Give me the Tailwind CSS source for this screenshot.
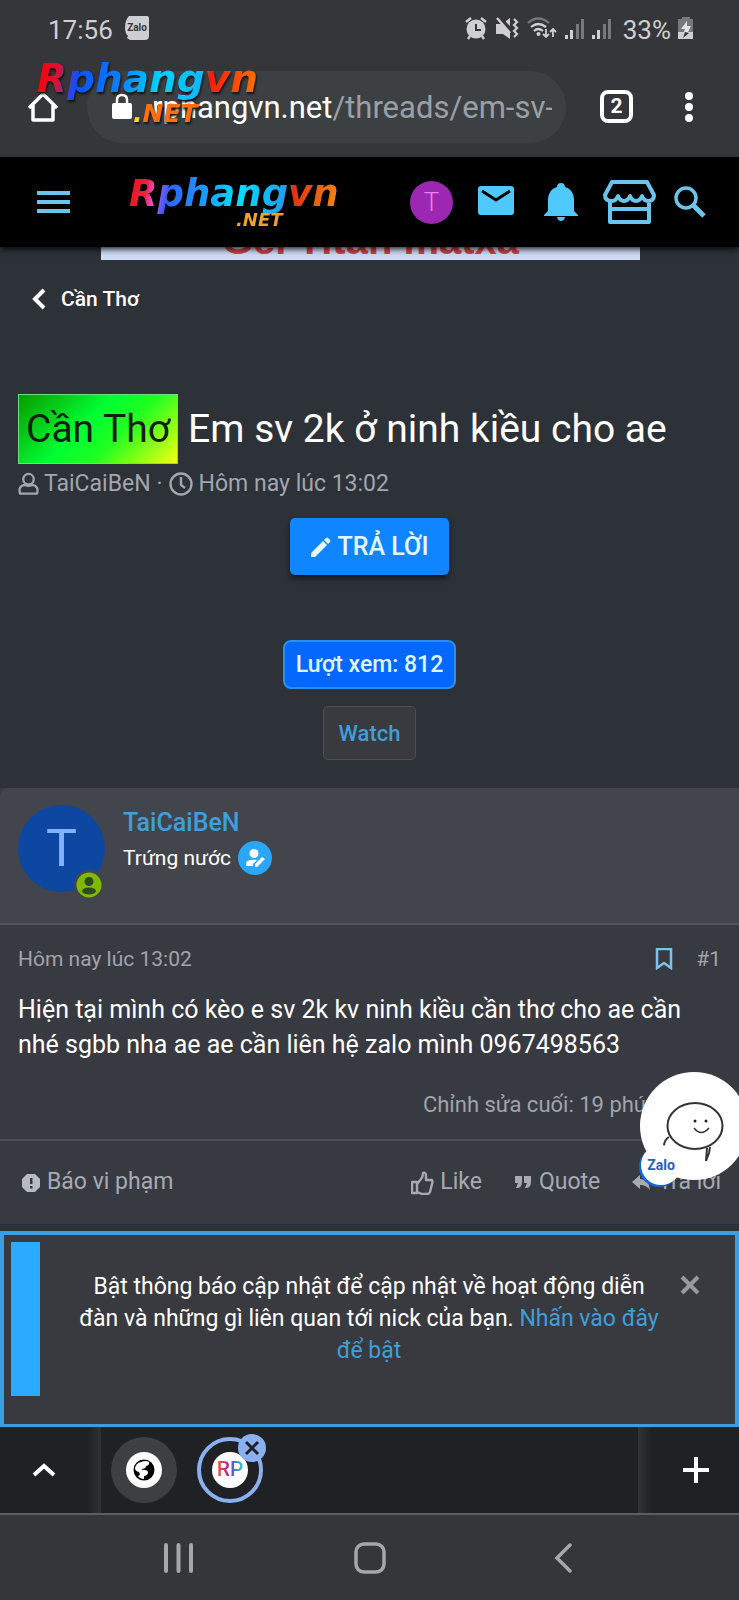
<!DOCTYPE html>
<html lang="vi">
<head>
<meta charset="utf-8">
<meta name="viewport" content="width=device-width, initial-scale=1">
<title>Cần Thơ</title>
<script src="https://cdn.jsdelivr.net/npm/@tailwindcss/browser@4"></script>
</head>
<body class="relative flex min-h-screen flex-col overflow-x-hidden bg-[#2d3138] font-[Roboto,'Noto_Sans',sans-serif] text-white">

<!-- Phone status bar -->
<div class="flex h-14 items-center bg-[#35363a] pr-[45px] pl-12 text-[26px] text-[#cfcfd1]">
  <span class="pt-1">17:56</span>
  <svg class="ml-3 h-6 w-6" viewBox="0 0 24 24" role="img" aria-label="Zalo"><path fill="#cfcfd1" d="M4 0h18q2 0 2 2v18q0 4-4 4H5l-3-2 1-2Q0 17 0 12 0 4 4 0z"/><text x="12" y="15" text-anchor="middle" font-family="Roboto,sans-serif" font-weight="700" font-size="10" fill="#35363a">Zalo</text></svg>
  <div class="ml-auto flex items-center gap-[7px]">
    <svg class="h-6 w-6" viewBox="0 0 24 24" fill="none" stroke="#cfcfd1"><circle cx="12" cy="13" r="9.500" fill="#cfcfd1" stroke="none"/><path d="M2 6l5-4M22 6l-5-4M6 20l-2 3M18 20l2 3" stroke-width="2.400"/><path d="M12 8v6h5" stroke="#35363a" stroke-width="2"/></svg>
    <svg class="h-6 w-6" viewBox="0 0 24 24"><path fill="#cfcfd1" d="M1 8h5l9 9v6l-7-5H1zM11 5l4-3v8l-4-4z"/><path d="M2 2l13 15" fill="none" stroke="#cfcfd1" stroke-width="2.400"/><path d="M18 3l3 3-3 3 3 3-3 3 3 3-3 3" transform="translate(1 0)" fill="none" stroke="#cfcfd1" stroke-width="2.200"/></svg>
    <svg class="h-6 w-8" viewBox="0 0 32 24" fill="none" stroke="#cfcfd1" stroke-width="2.200"><path d="M2 7q10-9 21 0" stroke="#77787b"/><path d="M5 11q7-6 15 0M8 15q4-4 9 0"/><circle cx="12.500" cy="18" r="2" fill="#cfcfd1" stroke="none"/><path d="M20 13v8M17 18l3 3 3-3M27 21v-8M24 16l3-3 3 3" stroke-width="1.800"/></svg>
    <svg class="h-6 w-5" viewBox="0 0 20 24"><path fill="#cfcfd1" d="M0 19h3v4H0zM5 14h3v9H5z"/><path fill="#77787b" d="M11 8h3v15h-3zM16 3h3v20h-3z"/></svg>
    <svg class="h-6 w-5" viewBox="0 0 20 24"><path fill="#cfcfd1" d="M0 19h3v4H0zM5 14h3v9H5z"/><path fill="#77787b" d="M11 8h3v15h-3zM16 3h3v20h-3z"/></svg>
    <span class="pt-1 pl-1">33%</span>
    <svg class="h-6 w-4" viewBox="0 0 16 24"><path fill="#77787b" d="M4 1h8v2h3v13H0V3h4z"/><path fill="#cfcfd1" d="M0 16h15v7H0z"/><path fill="#e4e4e6" d="M9 5l-6 8h4l-1 3h4l3-6H9z"/><path fill="#35363a" d="M5 22l6-5-4-1z"/></svg>
  </div>
</div>

<!-- Browser toolbar -->
<div class="flex h-[101px] items-center bg-[#35363a] pr-[45px] pl-[27px]">
  <button aria-label="Trang chủ"><svg class="h-8 w-8" viewBox="0 0 32 32" fill="none" stroke="#fff" stroke-width="3.500" stroke-linejoin="round"><path d="M2 17L16 3l14 14M6 14v15h20V14"/></svg></button>
  <div class="ml-7 flex h-[72px] min-w-0 flex-1 items-center rounded-full bg-[#3c4043] pr-[14px] pl-[25px]">
    <svg class="h-7 w-5 shrink-0" viewBox="0 0 20 28"><path fill="none" stroke="#fff" stroke-width="2.500" d="M5 12V7q0-5 5-5t5 5v5"/><rect y="10" width="20" height="16" rx="2" fill="#fff"/></svg>
    <div class="ml-5 min-w-0 flex-1 overflow-hidden pt-1 text-[31px] whitespace-nowrap">rphangvn.net<span class="text-[#9aa0a6]">/threads/em-sv-</span></div>
  </div>
  <button aria-label="Thẻ" class="ml-[34px] flex h-[33px] w-[33px] items-center justify-center rounded-lg border-4 border-white text-[21px] leading-none font-bold">2</button>
  <button aria-label="Menu" class="ml-[51px]"><svg class="h-8 w-[10px]" viewBox="0 0 10 32" fill="#fff"><circle cx="5" cy="5" r="4"/><circle cx="5" cy="16" r="4"/><circle cx="5" cy="27" r="4"/></svg></button>
</div>

<!-- Watermark logo floating over the toolbar -->
<div class="pointer-events-none absolute top-[57px] left-[37px] font-['DejaVu_Sans'] font-bold italic drop-shadow-[1px_2px_1px_#111]">
  <div class="bg-[linear-gradient(100deg,#f00_0%,#e01030_10%,#0a50ff_19%,#0a80ff_38%,#00d0ff_55%,#10b8ff_74%,#ff1a00_77%,#ff7a00_100%)] bg-clip-text text-[39px] leading-[44px] text-transparent">Rphangvn</div>
  <div class="-mt-px pl-24 text-[25px] leading-[28px] text-[#ff6f10]"><span class="text-[#ffe000]">.</span>NET</div>
</div>

<!-- Site header -->
<header class="relative z-10 flex h-[90px] items-center bg-black pr-[33px] pl-[37px] shadow-md shadow-black/60">
  <button aria-label="Trình đơn"><svg class="h-6 w-[33px]" viewBox="0 0 33 24" fill="#6cc4ec"><path d="M0 1h33v4H0zM0 10h33v4H0zM0 19h33v4H0z"/></svg></button>
  <a href="#" class="ml-[59px] font-['DejaVu_Sans'] font-bold italic">
    <span class="block bg-[linear-gradient(100deg,#f01010_0%,#f02040_9%,#f050d0_13%,#3060ff_19%,#18a0ff_38%,#00e0ff_52%,#20a0f0_73%,#e03010_77%,#f09010_100%)] bg-clip-text text-[37px] leading-[40px] text-transparent">Rphangvn</span>
    <span class="-mt-1 block bg-linear-to-r from-[#f0c030] to-[#f09020] bg-clip-text pl-[107px] text-[18px] leading-5 text-transparent">.NET</span>
  </a>
  <div class="ml-auto flex items-center">
    <a href="#" class="flex h-[43px] w-[43px] items-center justify-center rounded-full bg-[#9c27b0] text-[26px] font-light text-[#ea80fc]">T</a>
    <a href="#" aria-label="Tin nhắn" class="ml-[25px]"><svg class="h-9 w-9" viewBox="0 0 36 36"><rect y="2" width="36" height="29" rx="3" fill="#4fc8fb"/><path d="M4 7l14 9 14-9" fill="none" stroke="#000" stroke-width="3"/></svg></a>
    <a href="#" aria-label="Thông báo" class="ml-[30px]"><svg class="h-10 w-[34px]" viewBox="0 0 34 40" fill="#4fc8fb"><path d="M17 1q4 0 4 4 8 2 9 12v12l4 4v1H0v-1l4-4V17Q5 7 13 5q0-4 4-4zM13 35h8q-1 4-4 4t-4-4z"/></svg></a>
    <a href="#" aria-label="Cửa hàng" class="ml-[25px]"><svg class="h-[44px] w-[53px]" viewBox="0 0 53 44" fill="none" stroke="#6cc4ec" stroke-width="4" stroke-linejoin="round"><path d="M9 2h35l7 13q0 6-6 6-4 0-6-5-2 5-6 5t-6-5q-2 5-6 5t-6-5q-2 5-6 5-7 0-7-6zM7 21v21h39V21M7 29h39"/></svg></a>
    <a href="#" aria-label="Tìm kiếm" class="ml-[18px]"><svg class="h-8 w-8" viewBox="0 0 32 32" fill="none" stroke="#6cc4ec"><circle cx="12" cy="12" r="10" stroke-width="3.500"/><path d="M19 19l11 11" stroke-width="5"/></svg></a>
  </div>
</header>

<!-- Advert strip scrolled under the header -->
<div class="mr-[99px] ml-[101px] flex h-[13px] items-end justify-center overflow-hidden bg-[#cfdcf5] font-['Liberation_Sans'] text-[40px] leading-[40px] font-bold text-[#cc444c]"><span>Gel Titan matxa</span></div>

<nav class="flex pt-[25px] pl-8">
  <a href="#" class="flex items-center gap-[15px] text-[21px] leading-7 font-medium"><svg class="h-[22px] w-[14px]" viewBox="0 0 14 22" fill="none" stroke="#fff" stroke-width="4"><path d="M12 2L3 11l9 9"/></svg>Cần Thơ</a>
</nav>

<!-- Thread title -->
<section class="flex flex-col px-[18px] pt-[81px] pb-7">
  <h1 class="flex items-center gap-[10px] text-[39px] leading-[48px]"><span class="border border-[#6ae080] bg-[linear-gradient(135deg,#0a9a00,#00ff33_42%,#20ff20_62%,#f4ff10)] px-[7px] py-[10px] text-[#102010]">Cần Thơ</span>Em sv 2k ở ninh kiều cho ae</h1>
  <div class="mt-[6px] flex items-center text-[23px] leading-7 text-[#a2a6ae]">
    <svg class="h-6 w-[21px]" viewBox="0 0 22 24" fill="none" stroke="#a2a6ae" stroke-width="2.400"><circle cx="11" cy="7" r="5.500"/><path d="M2 22q-2-8 5-9 4 2 8 0 7 1 5 9z" stroke-linejoin="round"/></svg>
    <a href="#" class="ml-[5px]">TaiCaiBeN</a><span class="px-[6px]">·</span>
    <svg class="h-6 w-6" viewBox="0 0 24 24" fill="none" stroke="#a2a6ae" stroke-width="2.400"><circle cx="12" cy="12" r="10.500"/><path d="M12 5v8l4 3"/></svg>
    <time class="ml-[6px]">Hôm nay lúc 13:02</time>
  </div>
  <div class="mt-5 flex flex-col items-center">
    <button class="flex h-[57px] items-center gap-[7px] rounded-[5px] bg-[#0f86ff] px-[21px] text-[25px] font-medium text-[#e8f8ff] shadow-md shadow-black/50"><svg class="h-5 w-5" viewBox="0 0 20 20" fill="currentColor"><path d="M0 16L12 4l4 4L4 20H0zM13 3l2-2q1-1 2 0l2 2q1 1 0 2l-2 2z"/></svg>TRẢ LỜI</button>
    <span class="mt-[65px] flex h-[49px] items-center rounded-lg border-2 border-[#2a90e8] bg-[#0468ff] px-[11px] pt-px text-[23px] font-medium text-[#dff6ff]">Lượt xem: 812</span>
    <button class="mt-[17px] flex h-[54px] items-center rounded-[5px] border border-[#4c4e55] bg-[#383a40] px-[15px] text-[22px] font-medium text-[#3f9fdb]">Watch</button>
  </div>
</section>

<!-- First post -->
<article class="relative bg-[#383a42]">
  <header class="flex h-[137px] rounded-tl-lg border-b-2 border-[#51555c] bg-[#42464c] pt-[17px] pl-[18px]">
    <div class="relative flex h-[87px] w-[87px] items-center justify-center rounded-full bg-[#0d47a1] text-[52px] text-[#82b1ff]">T
      <svg class="absolute right-px -bottom-2 h-[30px] w-[30px]" viewBox="0 0 30 30"><circle cx="15" cy="15" r="15" fill="#42464c"/><circle cx="15" cy="15" r="12.500" fill="#7fb900"/><circle cx="15" cy="11.500" r="4.500" fill="#2f4a20"/><ellipse cx="15" cy="21" rx="7" ry="3.500" fill="#2f4a20"/></svg>
    </div>
    <div class="ml-[18px]">
      <a href="#" class="block text-[25px] leading-9 font-medium text-[#3f9fdb]">TaiCaiBeN</a>
      <div class="flex items-center gap-[7px] text-[21px] leading-[34px]">Trứng nước
        <svg class="h-[34px] w-[34px]" viewBox="0 0 34 34"><circle cx="17" cy="17" r="17" fill="#2ca6f8"/><g fill="#fff"><circle cx="16" cy="12.500" r="4.500"/><path d="M8 25v-3q1-4 11-3l-4 4v2zM17 23l7-7 3 2-8 8h-2z"/></g></svg></div>
    </div>
  </header>
  <div class="px-[18px]">
    <div class="flex items-center pt-5 text-[21px] leading-7 text-[#a0a4ab]">
      <time>Hôm nay lúc 13:02</time>
      <a href="#" aria-label="Đánh dấu" class="ml-auto"><svg class="h-[22px] w-[18px]" viewBox="0 0 18 22" fill="none" stroke="#7fc0ea" stroke-width="2.500"><path d="M2 1h14v19l-7-5-7 5z"/></svg></a>
      <a href="#" class="ml-[23px]">#1</a>
    </div>
    <p class="pt-[19px] text-[25px] leading-[35px]">Hiện tại mình có kèo e sv 2k kv ninh kiều cần thơ cho ae cần nhé sgbb nha ae ae cần liên hệ zalo mình 0967498563</p>
    <div class="flex justify-end pt-[29px] pr-[10px] pb-[20px] text-[22px] leading-7 text-[#a0a4ab]">Chỉnh sửa cuối: 19 phút trước</div>
  </div>
  <div class="flex h-[85px] items-center border-t-2 border-[#4b4f57] pr-[18px] pl-[22px] text-[23px] text-[#a6aab2]">
    <a href="#" class="flex items-center gap-[7px]"><svg class="h-[18px] w-[18px]" viewBox="0 0 18 18"><path fill="#b6bac2" d="M5 0h8l5 5v8l-5 5H5l-5-5V5z"/><path fill="#383a42" d="M8 4h2.500v6H8zM8 12h2.500v2.500H8z"/></svg>Báo vi phạm</a>
    <a href="#" class="ml-auto flex items-center gap-[6px]"><svg class="h-6 w-[23px]" viewBox="0 0 23 24" fill="none" stroke="currentColor" stroke-width="2.400" stroke-linejoin="round"><path d="M1 11h5v11H1zM6 13l4-5q2-2 2-6 3-1 3 3v4h6q1 2 0 4l-2 8q-1 2-3 2h-5l-5-2"/></svg>Like</a>
    <a href="#" class="ml-[33px] flex items-center gap-2"><svg class="h-[13px] w-4" viewBox="0 0 16 13" fill="currentColor"><path d="M0 0h7v6q0 5-4 6H1l2-5H0zM9 0h7v6q0 5-4 6h-2l2-5H9z"/></svg>Quote</a>
    <a href="#" class="ml-8 flex items-center gap-2"><svg class="h-4 w-[18px]" viewBox="0 0 18 16" fill="currentColor"><path d="M0 7l8-7v4q9 0 10 11-4-5-10-5v4z"/></svg>Trả lời</a>
  </div>
  <!-- Chat bubble -->
  <svg class="absolute -right-[10px] bottom-[43px] h-[110px] w-[110px]" viewBox="0 0 110 110" role="img" aria-label="Zalo">
    <circle cx="55" cy="55" r="54" fill="#fff"/>
    <g fill="none" stroke="#333" stroke-width="2"><ellipse cx="56" cy="55" rx="27.500" ry="23"/><path d="M30 66q-5 3-5 9M68 77l-1 13 3-8 1-6"/><path d="M55 57q7 9 15 0" stroke-width="1.500"/></g>
    <circle cx="56" cy="50" r="1.500" fill="#222"/><circle cx="67" cy="50" r="1.500" fill="#222"/>
  </svg>
  <span class="absolute right-[58px] bottom-[39px] flex h-10 w-10 items-center justify-center rounded-full bg-white text-[14px] font-bold text-[#1d62c4] shadow-[-2px_2px_0_#1565d8]">Zalo</span>
</article>

<!-- Push notification notice -->
<div class="mt-[7px] flex min-h-[196px] items-start border-4 border-b-[3px] border-[#3a9fe0] bg-[#383a40] pt-[7px] pr-[35px] pl-[7px]">
  <div class="h-[154px] w-[29px] shrink-0 bg-[#2aabff]"></div>
  <p class="flex-1 pt-[29px] pr-[15px] pl-[33px] text-center text-[23px] leading-8">Bật thông báo cập nhật để cập nhật về hoạt động diễn đàn và những gì liên quan tới nick của bạn. <a href="#" class="text-[#3f9fdb]">Nhấn vào đây để bật</a></p>
  <button aria-label="Đóng" class="mt-[33px]"><svg class="h-5 w-5" viewBox="0 0 20 20" stroke="#97999c" stroke-width="4"><path d="M2 2l16 16M18 2L2 18"/></svg></button>
</div>

<!-- Browser tab strip -->
<div class="flex h-[88px] items-center border-b-2 border-[#5c5d61] bg-[#202124]">
  <button aria-label="Mở rộng" class="flex w-[88px] justify-center"><svg class="h-[14px] w-6" viewBox="0 0 24 14" fill="none" stroke="#fff" stroke-width="4"><path d="M2 12L12 3l10 9"/></svg></button>
  <div class="h-full w-[13px] bg-linear-to-r from-[#202124] to-[#303134]"></div>
  <button aria-label="Thẻ trống" class="ml-[10px] flex h-[66px] w-[66px] items-center justify-center rounded-full bg-[#3c4043]"><svg class="h-9 w-9" viewBox="0 0 36 36"><circle cx="18" cy="18" r="18" fill="#fff"/><circle cx="18" cy="18" r="9.500" fill="#000" stroke="#000" stroke-width="2"/><path fill="#fff" d="M15 10q5-2 8 0 1 3-3 4 0 3-5 3 1 1 4 1 3 0 3 3-1 3-4 3v3q-4 0-6-3 3-1 1-4-4-1-4-4 1-5 6-6z"/></svg></button>
  <button aria-label="Rphangvn" class="relative ml-5 flex h-[66px] w-[66px] items-center justify-center rounded-full border-4 border-[#8ab0f0]">
    <span class="flex h-9 w-9 items-center justify-center rounded-full bg-white text-[21px] font-medium"><span class="bg-[linear-gradient(90deg,#f06030,#c02090_40%,#5060d0_60%,#30d0c0)] bg-clip-text text-transparent">RP</span></span>
    <svg class="absolute -top-[7px] -right-[7px] h-7 w-7" viewBox="0 0 28 28"><circle cx="14" cy="14" r="14" fill="#8ab0f0"/><path d="M8 8l12 12M20 8L8 20" stroke="#202124" stroke-width="3"/></svg>
  </button>
  <div class="ml-auto h-full w-[14px] bg-linear-to-r from-[#333437] to-[#202124]"></div>
  <button aria-label="Thẻ mới" class="flex w-[87px] justify-center"><svg class="h-[26px] w-[26px]" viewBox="0 0 26 26" stroke="#fff" stroke-width="4"><path d="M13 0v26M0 13h26"/></svg></button>
</div>

<!-- System navigation -->
<div class="flex min-h-[84px] flex-1 items-center justify-between bg-[#35363a] px-[164px]">
  <button aria-label="Gần đây"><svg class="h-[30px] w-[29px]" viewBox="0 0 29 30" stroke="#a6a7aa" stroke-width="4" stroke-linecap="round"><path d="M2 2v26M14.500 2v26M27 2v26"/></svg></button>
  <button aria-label="Màn hình chính"><svg class="h-8 w-8" viewBox="0 0 32 32" fill="none" stroke="#a6a7aa" stroke-width="3.500"><rect x="2" y="2" width="28" height="28" rx="8"/></svg></button>
  <button aria-label="Quay lại" class="flex w-7 justify-end pr-[3px]"><svg class="h-[30px] w-[18px]" viewBox="0 0 18 30" fill="none" stroke="#a6a7aa" stroke-width="3.500" stroke-linecap="round"><path d="M16 2L3 15l13 13"/></svg></button>
</div>
</body>
</html>
